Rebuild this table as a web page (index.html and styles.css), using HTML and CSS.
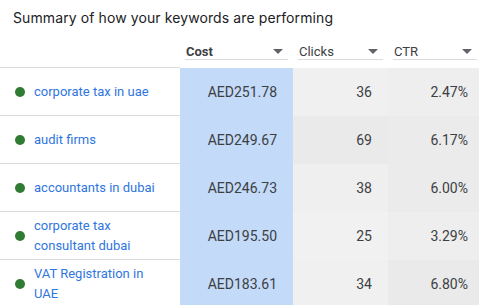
FILE: index.html
```html
<!DOCTYPE html>
<html>
<head>
<meta charset="utf-8">
<link rel="stylesheet" href="styles.css">
</head>
<body>
<div class="card">
  <div class="title">Summary of how your keywords are performing</div>
  <div class="grid">
    <div class="hcell blank"></div>
    <div class="hcell"><div class="hin bold"><span>Cost</span><span class="arrow"></span></div></div>
    <div class="hcell"><div class="hin"><span>Clicks</span><span class="arrow"></span></div></div>
    <div class="hcell"><div class="hin"><span>CTR</span><span class="arrow"></span></div></div>

    <div class="kw"><span class="dot"></span><a>corporate tax in uae</a></div>
    <div class="num cost">AED251.78</div>
    <div class="num" style="background:#f0f0f0">36</div>
    <div class="num last" style="background:#eeeeee">2.47%</div>

    <div class="kw"><span class="dot"></span><a>audit firms</a></div>
    <div class="num cost">AED249.67</div>
    <div class="num" style="background:#eaeaea">69</div>
    <div class="num last" style="background:#ebebeb">6.17%</div>

    <div class="kw"><span class="dot"></span><a>accountants in dubai</a></div>
    <div class="num cost">AED246.73</div>
    <div class="num" style="background:#efefef">38</div>
    <div class="num last" style="background:#ebebeb">6.00%</div>

    <div class="kw"><span class="dot"></span><a>corporate tax<br>consultant dubai</a></div>
    <div class="num cost">AED195.50</div>
    <div class="num" style="background:#f1f1f1">25</div>
    <div class="num last" style="background:#eeeeee">3.29%</div>

    <div class="kw"><span class="dot"></span><a>VAT Registration in<br>UAE</a></div>
    <div class="num cost">AED183.61</div>
    <div class="num" style="background:#f0f0f0">34</div>
    <div class="num last" style="background:#eaeaea">6.80%</div>
  </div>
</div>
</body>
</html>
```
FILE: styles.css
```css
html, body {
  margin: 0;
  padding: 0;
  background: #ffffff;
}
body {
  font-family: Roboto, "Liberation Sans", sans-serif;
  color: #3c4043;
  overflow: hidden;
}
.card {
  width: 482px;
}
.title {
  font-family: Inter, "Open Sans", sans-serif;
  font-size: 14px;
  color: #202124;
  padding: 9px 0 0 13px;
  height: 30px;
  box-sizing: border-box;
  letter-spacing: 0.1px;
}
.grid {
  display: grid;
  grid-template-columns: 180px 113px 95px 94px;
  grid-template-rows: 38px repeat(5, 48px);
}
.hcell {
  padding: 0 5px;
  display: flex;
  align-items: flex-end;
  border-bottom: 1px solid #dadce0;
}
.hcell:not(.blank) {
  border-bottom: none;
}
.hin {
  flex: 1;
  display: flex;
  align-items: center;
  justify-content: space-between;
  height: 22px;
  padding-top: 5px;
  box-sizing: border-box;
  border-bottom: 1px solid #dadce0;
  font-size: 13px;
  line-height: 15px;
  color: #3c4043;
  padding-left: 1px;
  margin-bottom: 8px;
}
.hin.bold {
  font-weight: 700;
  color: #3c4043;
}
.arrow {
  width: 0;
  height: 0;
  border-left: 5px solid transparent;
  border-right: 5px solid transparent;
  border-top: 5px solid #5f6368;
  margin-right: 5px;
}
.kw {
  display: flex;
  align-items: center;
  border-bottom: 1px solid #dadce0;
  padding-left: 15px;
  font-size: 13px;
  line-height: 20px;
}
.dot {
  width: 10px;
  height: 10px;
  border-radius: 50%;
  background: #2e7d32;
  flex: none;
  margin-right: 9px;
}
.kw a {
  color: #2f76e0;
  text-decoration: none;
}
.num {
  display: flex;
  align-items: center;
  justify-content: flex-end;
  font-size: 14px;
  color: #3c4043;
  padding-right: 16px;
}
.num.cost {
  background: #c3daf8;
  padding-right: 16px;
}
.num.last {
  padding-right: 14px;
}
```
